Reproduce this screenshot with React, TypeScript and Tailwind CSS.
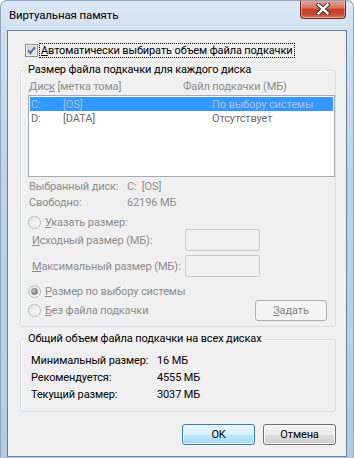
import React from "react";

const disabled = "text-[#8d8d8d]";

function CheckBox() {
  return (
    <svg width="13" height="13" viewBox="0 0 13 13" className="shrink-0">
      <defs>
        <linearGradient id="cbg" x1="0" y1="0" x2="1" y2="1">
          <stop offset="0" stopColor="#cdd1d7" />
          <stop offset="1" stopColor="#f6f6f6" />
        </linearGradient>
      </defs>
      <rect x="0.5" y="0.5" width="12" height="12" fill="#f4f4f4" stroke="#8e8f8f" />
      <rect x="2.5" y="2.5" width="8" height="8" fill="url(#cbg)" stroke="#b8bcc4" strokeWidth="0.6" />
      <path d="M3.2 6.4 L5.4 9 L9.8 3.4" fill="none" stroke="#4a64a4" strokeWidth="1.9" />
    </svg>
  );
}

function Radio({ checked = false }: { checked?: boolean }) {
  return (
    <svg width="13" height="13" viewBox="0 0 13 13" className="shrink-0">
      <defs>
        <linearGradient id="rbg" x1="0" y1="0" x2="1" y2="1">
          <stop offset="0" stopColor="#e6e6e6" />
          <stop offset="1" stopColor="#f8f8f8" />
        </linearGradient>
        <radialGradient id="rdot" cx="0.4" cy="0.4" r="0.6">
          <stop offset="0" stopColor="#c8c8c8" />
          <stop offset="1" stopColor="#7a7a7a" />
        </radialGradient>
      </defs>
      <circle cx="6.5" cy="6.5" r="6" fill="url(#rbg)" stroke="#b9b9b9" />
      {checked && <circle cx="6.5" cy="6.5" r="3.2" fill="url(#rdot)" stroke="#8a8a8a" strokeWidth="0.6" />}
    </svg>
  );
}

function GroupBox({ title, className, children }: { title: string; className: string; children: React.ReactNode }) {
  return (
    <div className={`ml-[12px] w-[316px] rounded-[3px] border border-[#d5dfe5] shadow-[inset_1px_1px_0_#ffffff] flex flex-col ${className}`}>
      <div className="-mt-[9px] ml-[5px] w-fit bg-[#f0f0f0] px-[2px] leading-[16px] text-black">{title}</div>
      {children}
    </div>
  );
}

function Button({ children, primary = false, off = false, w }: { children: React.ReactNode; primary?: boolean; off?: boolean; w: string }) {
  const skin = off
    ? "border-[#adb2b5] bg-[#f4f4f4] text-[#838383]"
    : primary
      ? "border-[#3c7fb1] bg-[linear-gradient(#eaf6fd_0%,#d9f0fc_50%,#bee6fd_50%,#a7d9f5_100%)] text-black shadow-[inset_0_0_0_1px_#e3f4fc]"
      : "border-[#707070] bg-[linear-gradient(#f2f2f2_0%,#ebebeb_50%,#dddddd_50%,#cfcfcf_100%)] text-black shadow-[inset_0_0_0_1px_#fcfcfc]";
  return (
    <div className={`${w} h-[21px] rounded-[3px] border flex items-center justify-center leading-none ${skin}`}>
      {children}
    </div>
  );
}

export default function App() {
  return (
    <div className="w-[354px] h-[458px] overflow-hidden whitespace-nowrap rounded-t-[7px] border border-b-0 border-[#8ea4bd] bg-[linear-gradient(180deg,#dce8f5_0%,#cfdff0_8%,#bdd2ea_40%,#b4cbe6_100%)] flex flex-col font-['Roboto',sans-serif] text-[11px] tracking-[-0.12px] text-black">
      {/* TITLE BAR */}
      <div className="h-[29px] flex items-start shrink-0">
        <div className="pl-[8px] pt-[6px] leading-[16px] text-[11.5px] text-black">Виртуальная память</div>
        <div className="ml-auto mr-[7px] w-[46px] h-[19px] -mt-px rounded-b-[4px] border border-t-0 border-[#6e2a20] bg-[linear-gradient(180deg,#eaa898_0%,#d96f5d_45%,#c4402b_52%,#c94a33_80%,#dc7a5e_100%)] shadow-[inset_0_0_0_1px_rgba(255,255,255,0.35)] flex items-center justify-center">
          <svg width="14" height="12" viewBox="0 0 14 12">
            <path d="M2.5 1.8 L11.5 10.2 M11.5 1.8 L2.5 10.2" stroke="#3b3436" strokeWidth="4.4" strokeLinecap="square" />
            <path d="M2.5 1.8 L11.5 10.2 M11.5 1.8 L2.5 10.2" stroke="#ffffff" strokeWidth="2.4" strokeLinecap="square" />
          </svg>
        </div>
      </div>

      {/* CONTENT */}
      <div className="mx-[6px] h-[427px] border border-[#6b809b] bg-[#f0f0f0] flex flex-col">
        {/* AUTO CHECKBOX */}
        <div className="mt-[12px] ml-[17px] h-[15px] flex items-center">
          <CheckBox />
          <span className="ml-[1px] px-[1px] leading-[13px] border border-dotted border-black">
            <u>А</u>втоматически выбирать объем файла подкачки
          </span>
        </div>

        {/* PER-DISK GROUP */}
        <GroupBox title="Размер файла подкачки для каждого диска" className="mt-[12px] h-[257px]">
          <div className={`mt-[1px] pl-[8px] flex leading-[15px] ${disabled}`}>
            <span className="w-[154px]">
              Дис<u>к</u> [метка тома]
            </span>
            <span>Файл подкачки (МБ)</span>
          </div>

          <div className="mt-[1px] ml-[7px] w-[307px] h-[82px] border border-[#a5acb5] bg-white flex flex-col">
            <div className="mt-[1px] mx-[1px] h-[14px] bg-[#3399ff] text-[#a8c2de] flex items-center leading-none">
              <span className="pl-[1px] w-[33px]">C:</span>
              <span className="w-[149px]">[OS]</span>
              <span>По выбору системы</span>
            </div>
            <div className="mx-[1px] h-[14px] text-[#6d6d6d] flex items-center leading-none">
              <span className="pl-[1px] w-[33px]">D:</span>
              <span className="w-[149px]">[DATA]</span>
              <span>Отсутствует</span>
            </div>
          </div>

          <div className={`mt-[2px] pl-[8px] leading-[15px] ${disabled}`}>
            <div className="flex">
              <span className="w-[98px]">Выбранный диск:</span>
              <span>C:&nbsp; [OS]</span>
            </div>
            <div className="mt-[1px] flex">
              <span className="w-[98px]">Свободно:</span>
              <span>62196 МБ</span>
            </div>
          </div>

          <div className={`mt-[5px] pl-[7px] h-[14px] flex items-center ${disabled}`}>
            <Radio />
            <span className="ml-[4px] leading-none">
              <u>У</u>казать размер:
            </span>
          </div>

          <div className={`pl-[11px] h-[22px] flex items-center ${disabled}`}>
            <span className="w-[153px] leading-none">
              <u>И</u>сходный размер (МБ):
            </span>
            <div className="w-[75px] h-[22px] rounded-[2px] border border-[#c9cccf] bg-[#f0f0f0]" />
          </div>

          <div className={`mt-[4px] pl-[11px] h-[22px] flex items-center ${disabled}`}>
            <span className="w-[153px] leading-none">
              <u>М</u>аксимальный размер (МБ):
            </span>
            <div className="w-[75px] h-[22px] rounded-[2px] border border-[#c9cccf] bg-[#f0f0f0]" />
          </div>

          <div className={`mt-[7px] pl-[7px] h-[14px] flex items-center ${disabled}`}>
            <Radio checked />
            <span className="ml-[4px] leading-none">
              <u>Р</u>азмер по выбору системы
            </span>
          </div>

          <div className={`mt-[2px] pl-[7px] pr-[8px] h-[21px] flex items-center ${disabled}`}>
            <Radio />
            <span className="ml-[4px] leading-none">
              <u>Б</u>ез файла подкачки
            </span>
            <div className="ml-auto">
              <Button off w="w-[72px]">
                <span>
                  <u>З</u>адать
                </span>
              </Button>
            </div>
          </div>
        </GroupBox>

        {/* TOTALS GROUP */}
        <GroupBox title="Общий объем файла подкачки на всех дисках" className="mt-[12px] h-[73px]">
          <div className="mt-[5px] pl-[10px] leading-[17px] text-black">
            <div className="flex">
              <span className="w-[126px]">Минимальный размер:</span>
              <span>16 МБ</span>
            </div>
            <div className="flex">
              <span className="w-[126px]">Рекомендуется:</span>
              <span>4555 МБ</span>
            </div>
            <div className="flex">
              <span className="w-[126px]">Текущий размер:</span>
              <span>3037 МБ</span>
            </div>
          </div>
        </GroupBox>

        {/* DIALOG BUTTONS */}
        <div className="mt-[12px] pr-[10px] flex justify-end gap-[8px]">
          <Button primary w="w-[73px]">OK</Button>
          <Button w="w-[73px]">Отмена</Button>
        </div>
      </div>
    </div>
  );
}
